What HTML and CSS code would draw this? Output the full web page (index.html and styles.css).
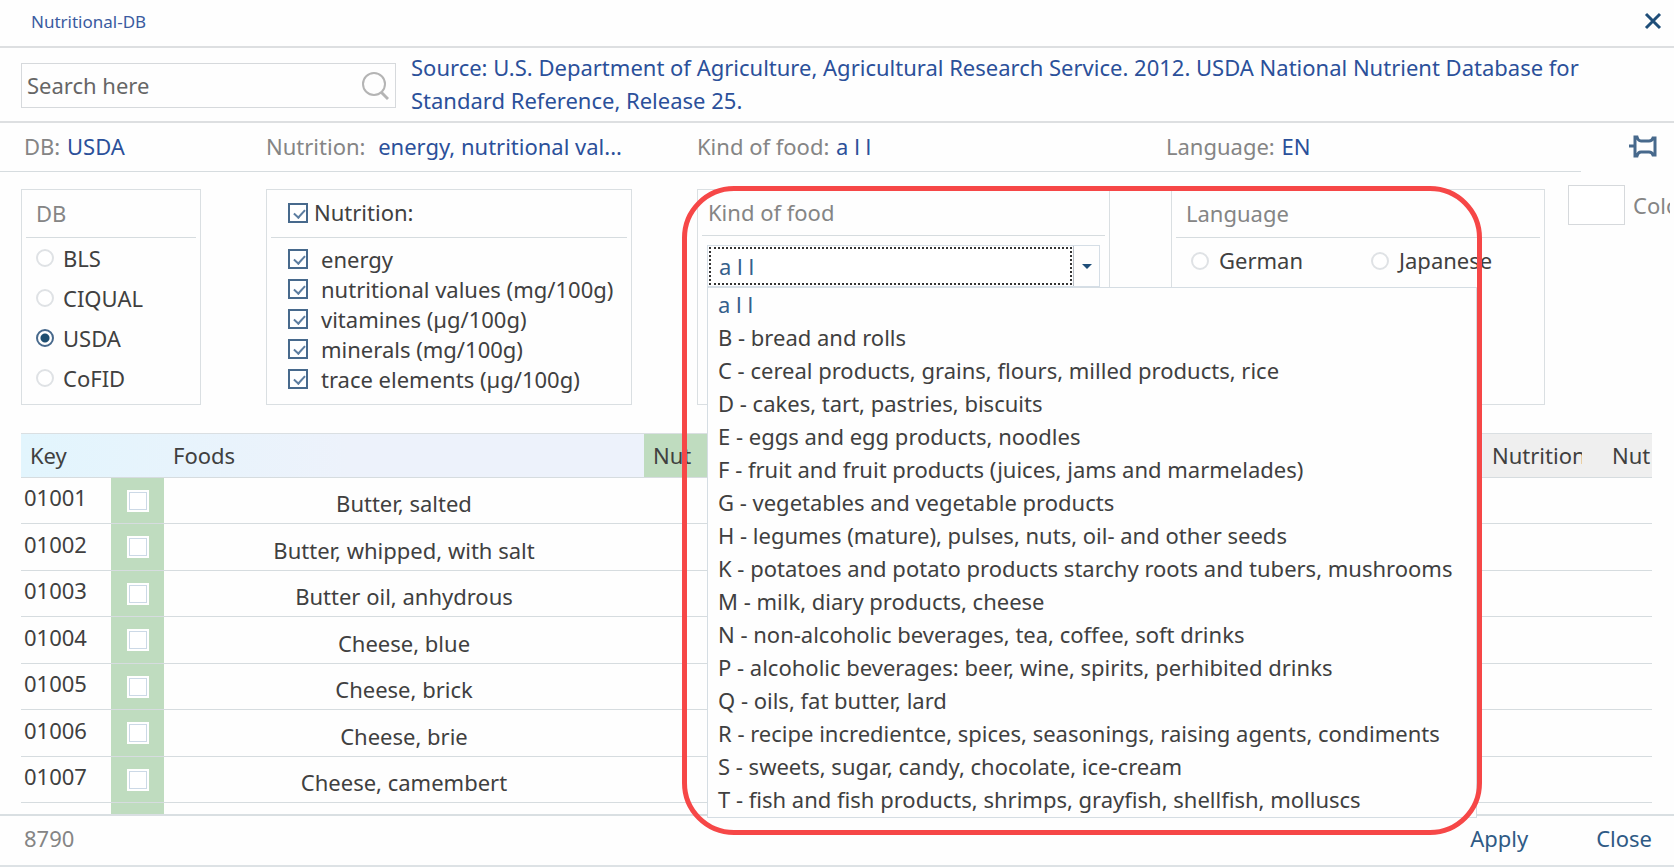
FILE: index.html
```
<!DOCTYPE html>
<html lang="en">
<head>
  <meta charset="UTF-8">
  <title>Nutritional-DB</title>
  <link rel="stylesheet" href="styles.css">
</head>
<body>

  <header class="titlebar">
    <h1>Nutritional-DB</h1>
    <button type="button" class="icon-button" aria-label="Close window">
      <svg width="18" height="18" viewBox="0 0 18 18"><path d="M2 2l14 14M16 2L2 16" fill="none" stroke="#1f4e79" stroke-width="3"/></svg>
    </button>
  </header>

  <section class="search-row">
    <div class="search">
      <input type="text" placeholder="Search here" aria-label="Search here">
      <svg width="28" height="30" viewBox="0 0 28 30"><g fill="none" stroke="#b4b4b4" stroke-width="2"><circle cx="13" cy="13" r="11"/><path d="M20 21l7 7" stroke-width="3"/></g></svg>
    </div>
    <p class="source">Source: U.S. Department of Agriculture, Agricultural Research Service. 2012. USDA National Nutrient Database for Standard Reference, Release 25.</p>
  </section>

  <section class="summary columns">
    <p>DB: <b>USDA</b></p>
    <p>Nutrition: <b class="spaced">energy, nutritional val...</b></p>
    <p>Kind of food: <b>a l l</b></p>
    <p class="lang">Language: <b>EN</b></p>
    <button type="button" class="icon-button" aria-label="Pin filters">
      <svg width="28" height="24" viewBox="0 0 28 24"><path d="M0 11h6M6 2h2q1 4 4 4h8q3 0 4-3h2v17h-2q-1-3-4-3h-8q-3 0-4 4H6z" fill="none" stroke="#47698c" stroke-width="3"/></svg>
    </button>
  </section>

  <section class="filters columns">
    <fieldset class="panel db">
      <legend>DB</legend>
      <label><input type="radio" name="db"> BLS</label>
      <label><input type="radio" name="db"> CIQUAL</label>
      <label><input type="radio" name="db" checked> USDA</label>
      <label><input type="radio" name="db"> CoFID</label>
    </fieldset>

    <div class="panel nutrition">
      <label class="head"><input type="checkbox" checked> Nutrition:</label>
      <div class="options">
        <label><input type="checkbox" checked> energy</label>
        <label><input type="checkbox" checked> nutritional values (mg/100g)</label>
        <label><input type="checkbox" checked> vitamines (µg/100g)</label>
        <label><input type="checkbox" checked> minerals (mg/100g)</label>
        <label><input type="checkbox" checked> trace elements (µg/100g)</label>
      </div>
    </div>

    <div class="panel kind">
      <label class="head" for="kind">Kind of food</label>
      <div class="combo">
        <select id="kind">
          <option>a l l</option>
        </select>
        <span class="arrow"></span>
        <ul class="menu">
          <li class="selected">a l l</li>
          <li>B - bread and rolls</li>
          <li>C - cereal products, grains, flours, milled products, rice</li>
          <li>D - cakes, tart, pastries, biscuits</li>
          <li>E - eggs and egg products, noodles</li>
          <li>F - fruit and fruit products (juices, jams and marmelades)</li>
          <li>G - vegetables and vegetable products</li>
          <li>H - legumes (mature), pulses, nuts, oil- and other seeds</li>
          <li>K - potatoes and potato products starchy roots and tubers, mushrooms</li>
          <li>M - milk, diary products, cheese</li>
          <li>N - non-alcoholic beverages, tea, coffee, soft drinks</li>
          <li>P - alcoholic beverages: beer, wine, spirits, perhibited drinks</li>
          <li>Q - oils, fat butter, lard</li>
          <li>R - recipe incredientce, spices, seasonings, raising agents, condiments</li>
          <li>S - sweets, sugar, candy, chocolate, ice-cream</li>
          <li>T - fish and fish products, shrimps, grayfish, shellfish, molluscs</li>
        </ul>
      </div>
      <div class="highlight"></div>
    </div>

    <fieldset class="panel language">
      <legend>Language</legend>
      <div class="choices">
        <label><input type="radio" name="language"> German</label>
        <label><input type="radio" name="language"> Japanese</label>
      </div>
    </fieldset>

    <div class="color">
      <input type="text" id="color">
      <label for="color">Color</label>
    </div>
  </section>

  <main class="foods">
    <table>
      <colgroup>
        <col class="col-key"><col class="col-check"><col class="col-food"><col class="col-first"><col><col class="col-wide"><col class="col-last">
      </colgroup>
      <thead>
        <tr><th>Key</th><th></th><th>Foods</th><th class="green">Nut</th><th></th><th class="grey"><div>Nutrition</div></th><th class="grey">Nut</th></tr>
      </thead>
      <tbody>
        <tr><td>01001</td><td><input type="checkbox" aria-label="Butter, salted"></td><td>Butter, salted</td><td colspan="4"></td></tr>
        <tr><td>01002</td><td><input type="checkbox" aria-label="Butter, whipped, with salt"></td><td>Butter, whipped, with salt</td><td colspan="4"></td></tr>
        <tr><td>01003</td><td><input type="checkbox" aria-label="Butter oil, anhydrous"></td><td>Butter oil, anhydrous</td><td colspan="4"></td></tr>
        <tr><td>01004</td><td><input type="checkbox" aria-label="Cheese, blue"></td><td>Cheese, blue</td><td colspan="4"></td></tr>
        <tr><td>01005</td><td><input type="checkbox" aria-label="Cheese, brick"></td><td>Cheese, brick</td><td colspan="4"></td></tr>
        <tr><td>01006</td><td><input type="checkbox" aria-label="Cheese, brie"></td><td>Cheese, brie</td><td colspan="4"></td></tr>
        <tr><td>01007</td><td><input type="checkbox" aria-label="Cheese, camembert"></td><td>Cheese, camembert</td><td colspan="4"></td></tr>
        <tr><td></td><td></td><td></td><td colspan="4"></td></tr>
      </tbody>
    </table>
  </main>

  <footer>
    <span>8790</span>
    <button type="button">Apply</button>
    <button type="button">Close</button>
  </footer>

</body>
</html>
```
FILE: styles.css
```
* {
  box-sizing: border-box;
}
body {
  margin: 0;
  height: 100vh;
  display: flex;
  flex-direction: column;
  overflow: hidden;
  border-bottom: 2px solid #dde2e5;
  font: 22px/33px "Noto Sans", sans-serif;
  color: #404040;
  background: #fefefe;
}
h1, p, ul {
  margin: 0;
  padding: 0;
  font-weight: normal;
}
input, select, button {
  font: inherit;
  color: inherit;
  margin: 0;
}
button {
  padding: 0;
  border: 0;
  background: none;
}
.icon-button {
  display: flex;
}

/* title and search */
.titlebar {
  display: flex;
  justify-content: space-between;
  align-items: center;
  height: 48px;
  padding: 0 12px 4px 31px;
  border-bottom: 2px solid #dddfe1;
  color: #3a5ba0;
}
.titlebar h1 {
  font-size: 17px;
}
.search-row {
  display: flex;
  gap: 15px;
  height: 75px;
  padding: 3px 21px 0;
  border-bottom: 2px solid #dddfe1;
}
.search {
  display: flex;
  align-items: center;
  width: 375px;
  height: 45px;
  margin-top: 12px;
  padding-right: 6px;
  border: 1px solid #d6d9dc;
}
.search input {
  flex: 1;
  min-width: 0;
  padding: 0 0 0 5px;
  border: 0;
  background: none;
}
.search input::placeholder {
  color: #666;
  opacity: 1;
}
.source {
  flex: 1;
  color: #2b509a;
}

/* summary and filter panels share the same columns */
.columns {
  display: grid;
  grid-template-columns: 245fr 431fr 474fr 397fr 106fr;
  padding-left: 21px;
}
.summary {
  height: 49px;
  padding-bottom: 2px;
  align-items: center;
  color: #858585;
  background: linear-gradient(#d6dcdf, #d6dcdf) 0 100% / calc(100% - 93px) 1px no-repeat;
}
.summary p {
  padding-left: 3px;
}
.summary p + p {
  padding-left: 0;
}
.summary .lang {
  margin-left: -5px;
}
.summary b {
  margin-left: 1px;
  font-weight: normal;
  color: #2b509a;
}
.summary .spaced {
  margin-left: 7px;
}
.summary .icon-button {
  margin-left: 61px;
}
.filters {
  height: 261px;
  padding-top: 17px;
  align-items: start;
}
.panel {
  position: relative;
  height: 216px;
  min-width: 0;
  margin: 0;
  padding: 0 4px;
  border: 1px solid #dadfe2;
}
.panel legend, .head {
  display: flex;
  align-items: center;
  float: left;
  width: 100%;
  height: 48px;
  padding: 0 10px;
  border-bottom: 1px solid #d6dcdf;
  color: #858585;
}
.db {
  margin-right: 65px;
}
.db label {
  display: flex;
  align-items: center;
  gap: 9px;
  clear: both;
  height: 40px;
  padding-left: 10px;
}
input[type="radio"] {
  appearance: none;
  width: 18px;
  height: 18px;
  border: 2px solid #dfe2e5;
  border-radius: 50%;
  background: #fff;
}
input[type="radio"]:checked {
  border-color: #47698c;
  background: radial-gradient(#1f4e70 4px, #fff 5px);
}
.nutrition {
  margin-right: 65px;
}
.nutrition .head {
  gap: 6px;
  padding: 0 17px 2px;
  color: #404040;
}
.nutrition input {
  appearance: none;
  width: 20px;
  height: 20px;
  border: 2px solid #47698c;
  background: #fff;
}
.nutrition input:checked::before {
  content: "";
  display: block;
  width: 9px;
  height: 5px;
  margin: 4px;
  border: solid #5c7da0;
  border-width: 0 0 2px 2px;
  transform: rotate(-48deg);
}
.options {
  clear: both;
  height: 157px;
  padding: 6px 0 0 17px;
  overflow: hidden;
}
.options label {
  display: flex;
  align-items: center;
  gap: 13px;
  height: 30px;
  white-space: nowrap;
}
.kind {
  margin-right: 61px;
}
.kind .head {
  height: 46px;
  padding: 0 6px;
}
.combo {
  position: relative;
  display: flex;
  float: left;
  width: calc(100% - 10px);
  height: 42px;
  margin: 9px 5px 0;
  border: 1px solid #d5dee6;
}
.combo select {
  appearance: none;
  flex: 1;
  min-width: 0;
  margin: 1px;
  padding: 0 8px;
  border: 2px dotted #333;
  border-radius: 0;
  background: #fff;
  color: #35608c;
}
.arrow {
  display: flex;
  align-items: center;
  justify-content: center;
  width: 26px;
  border-left: 1px solid #b8bec6;
}
.arrow::before {
  content: "";
  border: 5px solid transparent;
  border-top-color: #1f4e79;
  border-bottom: 0;
}
.menu {
  position: absolute;
  z-index: 2;
  top: 41px;
  left: -1px;
  width: 770px;
  padding: 0 10px 1px;
  border: 1px solid #d5dde3;
  background: #fefefe;
  list-style: none;
  white-space: nowrap;
}
.menu .selected {
  color: #35608c;
}
.highlight {
  position: absolute;
  z-index: 3;
  top: -4px;
  left: -16px;
  width: 800px;
  height: 649px;
  border: 5px solid #f64747;
  border-radius: 52px;
  pointer-events: none;
}
.language {
  margin-right: 23px;
}
.choices {
  display: grid;
  grid-template-columns: 180px 1fr;
  clear: both;
  padding: 6px 0 0 15px;
}
.choices label {
  display: flex;
  align-items: center;
  gap: 10px;
}
.color {
  display: flex;
  align-items: center;
  gap: 8px;
  margin: -4px 4px 0 0;
  overflow: hidden;
  color: #858585;
}
.color input {
  flex: none;
  width: 57px;
  height: 40px;
  border: 1px solid #d6d9dc;
  background: #fff;
}

/* food list */
.foods {
  flex: 1;
  min-height: 0;
  padding: 0 22px 0 21px;
  overflow: hidden;
}
table {
  width: 100%;
  border-collapse: collapse;
  table-layout: fixed;
}
.col-key {
  width: 90px;
}
.col-check {
  width: 53px;
}
.col-food {
  width: 480px;
}
.col-first {
  width: 64px;
}
.col-wide {
  width: 120px;
}
.col-last {
  width: 49px;
}
thead tr {
  height: 44px;
  border-top: 1px solid #dadfe2;
  border-bottom: 1px solid #d6dcdf;
  background: linear-gradient(90deg, #e2f5fd, #edf2fb 20%);
}
th {
  padding: 0 0 0 9px;
  font-weight: normal;
  text-align: left;
  overflow: hidden;
  white-space: nowrap;
}
th div {
  width: 90px;
  overflow: hidden;
}
.green {
  background: #bfdcbf;
}
.grey {
  background: #efefef;
}
tbody tr {
  height: 46px;
  border-bottom: 1px solid #d6dcdf;
}
tbody tr:nth-child(even) {
  height: 47px;
}
td {
  padding: 0;
}
td:first-child {
  padding: 0 3px 6px;
}
td:nth-child(2) {
  background: #bfdcbf;
  text-align: center;
  line-height: 0;
}
td:nth-child(3) {
  padding-top: 6px;
  text-align: center;
}
td input {
  appearance: none;
  width: 22px;
  height: 22px;
  border: 2px solid #fff;
  background: #fff;
  box-shadow: inset 0 0 0 1px #ccd9e6;
}

footer {
  display: flex;
  align-items: center;
  gap: 68px;
  height: 51px;
  padding: 0 22px 4px 24px;
  border-top: 2px solid #d9dfe2;
  color: #2f5a85;
}
footer span {
  margin-right: auto;
  color: #858585;
}
```
